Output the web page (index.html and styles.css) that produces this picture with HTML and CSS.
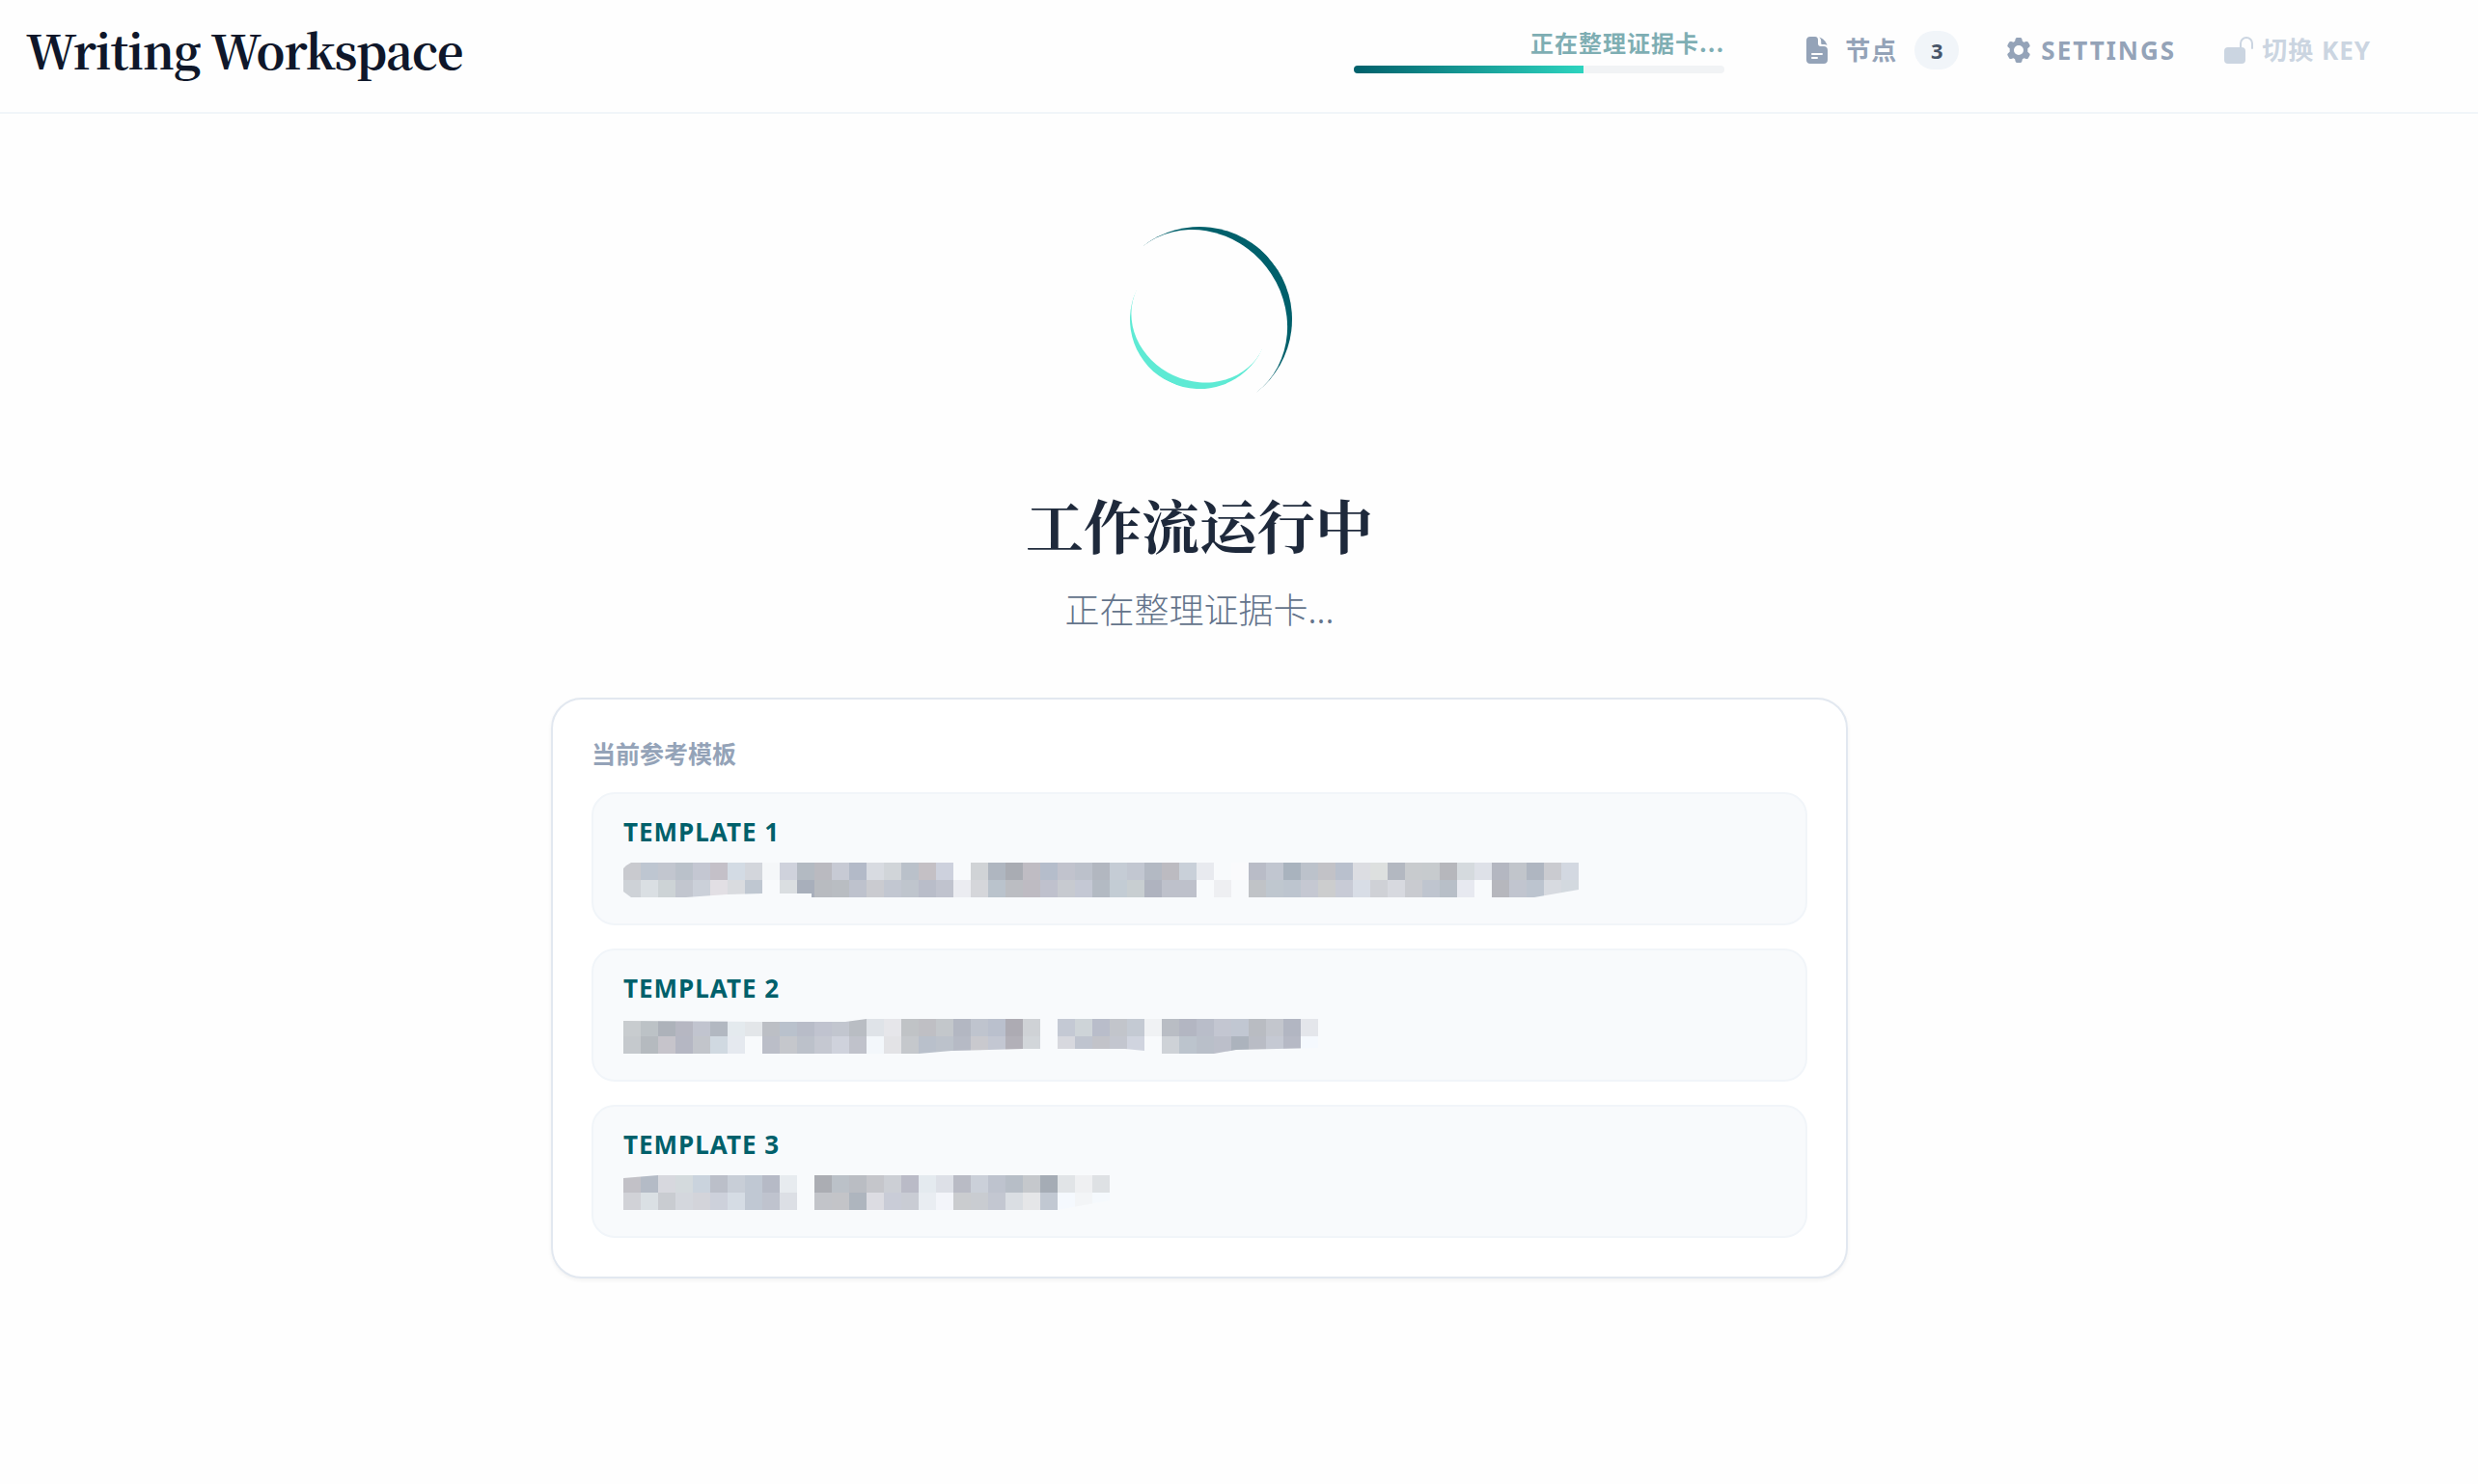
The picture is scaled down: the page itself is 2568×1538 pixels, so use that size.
FILE: index.html
```html
<!DOCTYPE html>
<html lang="zh-CN">
<head>
<meta charset="utf-8">
<meta name="viewport" content="width=device-width, initial-scale=1">
<title>Writing Workspace</title>
<link rel="stylesheet" href="styles.css">
</head>
<body>
<header class="topbar">
  <h1 class="brand">Writing Workspace</h1>
  <div class="status">
    <label class="status-label" for="run-progress">正在整理证据卡...</label>
    <progress class="status-bar" id="run-progress" value="62" max="100"></progress>
  </div>
  <nav class="actions">
    <button class="action action-cjk action-wide" type="button">
      <svg class="icon icon-doc" viewBox="0 0 22 28" aria-hidden="true">
        <path fill="currentColor" fill-rule="evenodd" d="M4 0h5c2 0 3 1.500 3 3.500V7c0 2 1 3 3 3h3c2.500 0 4 1.500 4 4v10c0 2.500-1.500 4-4 4H4c-2.500 0-4-1.500-4-4V4c0-2.500 1.500-4 4-4zM6 17a1 1 0 0 0 0 2h10a1 1 0 0 0 0-2zM6 21a1 1 0 0 0 0 2h5a1 1 0 0 0 0-2z"/>
        <path fill="currentColor" d="M13 .5c4 1 7.500 4.500 8.500 8.500-1-.6-2-.9-3-.9h-2c-.8 0-1.300-.5-1.300-1.300V4.500c0-1.500-.7-3-2.200-4z"/>
      </svg>
      <span>节点</span>
      <span class="badge">3</span>
    </button>
    <button class="action" type="button">
      <svg class="icon icon-gear" viewBox="0 0 26 26" aria-hidden="true">
        <path fill="currentColor" fill-rule="evenodd" d="M10.500 0h3c1 0 1.700.6 1.900 1.500l.5 2.300 1.600.9 2.200-.7c.9-.3 1.700 0 2.200.8l1.500 2.600c.5.900.3 1.700-.4 2.300L21.300 11.300v3.400l1.700 1.600c.7.600.9 1.400.4 2.300l-1.500 2.600c-.5.800-1.300 1.100-2.200.8l-2.200-.7-1.600.9-.5 2.300c-.2.900-.9 1.500-1.900 1.500h-3c-1 0-1.700-.6-1.900-1.500l-.5-2.300-1.600-.9-2.200.7c-.9.300-1.700 0-2.200-.8L.6 18.600c-.5-.9-.3-1.700.4-2.300l1.700-1.600v-3.400L1 9.700c-.7-.6-.9-1.400-.4-2.300l1.500-2.600c.5-.8 1.300-1.100 2.200-.8l2.200.7 1.600-.9.500-2.300C8.800.6 9.500 0 10.500 0zM12 8a5 5 0 1 0 0 10 5 5 0 0 0 0-10z"/>
      </svg>
      <span>SETTINGS</span>
    </button>
    <button class="action action-cjk action-muted" type="button">
      <svg class="icon icon-lock" viewBox="0 0 30 28" aria-hidden="true">
        <rect fill="currentColor" x="0" y="11" width="22" height="17" rx="4"/>
        <path fill="none" stroke="currentColor" stroke-width="2" stroke-linecap="round" d="M17 12V7a6 6 0 0 1 12 0v5"/>
      </svg>
      <span>切换 KEY</span>
    </button>
  </nav>
</header>

<main class="stage">
  <div class="spinner" aria-hidden="true">
    <div class="ring-inner"></div>
  </div>
  <h2 class="headline">工作流运行中</h2>
  <p class="substatus">正在整理证据卡...</p>

  <section class="panel">
    <h3 class="panel-title">当前参考模板</h3>
    <ul class="templates">
      <li class="template">
        <span class="template-name">TEMPLATE 1</span>
        <svg class="mosaic" data-mosaic="0" aria-hidden="true"></svg>
      </li>
      <li class="template">
        <span class="template-name">TEMPLATE 2</span>
        <svg class="mosaic" data-mosaic="1" aria-hidden="true"></svg>
      </li>
      <li class="template">
        <span class="template-name">TEMPLATE 3</span>
        <svg class="mosaic" data-mosaic="2" aria-hidden="true"></svg>
      </li>
    </ul>
  </section>
</main>
<script src="mosaic.js"></script>
</body>
</html>
```
FILE: styles.css
```css
:root {
  --ink: #0f172a;
  --heading: #1e293b;
  --muted: #94a3b8;
  --faint: #cbd5e1;
  --teal: #00606b;
  --mint: #5eead4;
  --line: #e2e8f0;
  --line-soft: #f1f5f9;
  --surface: #f8fafc;
}

* { box-sizing: border-box; }

body {
  margin: 0;
  background: #fefefe;
  color: var(--heading);
  font-family: "Noto Sans", "Noto Sans CJK SC", sans-serif;
  font-size: 26px;
  line-height: 32px;
}

h1, h2, h3, p, ul { margin: 0; padding: 0; }

.topbar {
  display: flex;
  align-items: center;
  height: 118px;
  padding: 0 111px 12px 27px;
  border-bottom: 2px solid var(--line-soft);
}

.brand {
  margin-right: auto;
  color: var(--ink);
  font-family: "Noto Serif CJK SC", "Source Serif 4", "Liberation Serif", serif;
  font-size: 48px;
  font-weight: 700;
  line-height: 64px;
  letter-spacing: -1px;
}

.status {
  display: flex;
  flex-direction: column;
  align-items: flex-end;
  gap: 8px;
  width: 384px;
  margin-right: 85px;
}

.status-label {
  color: var(--teal);
  font-family: "Noto Sans CJK SC", sans-serif;
  font-size: 24px;
  font-weight: 700;
  letter-spacing: 1px;
  opacity: 0.5;
}

.status-bar {
  appearance: none;
  display: block;
  width: 100%;
  height: 8px;
  border: 0;
  border-radius: 4px;
  overflow: hidden;
  background: #f1f3f5;
}

.status-bar::-webkit-progress-bar { background: #f1f3f5; }

.status-bar::-webkit-progress-value {
  background: linear-gradient(to right, var(--teal), #2dd4bf);
}

.actions {
  display: flex;
  align-items: center;
  gap: 50px;
}

.action {
  display: flex;
  align-items: center;
  gap: 9px;
  padding: 0;
  border: 0;
  background: none;
  color: var(--muted);
  font: inherit;
  font-weight: 700;
  letter-spacing: 2px;
}

.action-cjk { letter-spacing: 1px; }
.action-wide { gap: 18px; }
.action-muted { color: var(--faint); }

.icon { display: block; flex: none; }
.icon-doc { width: 22px; height: 28px; }
.icon-gear { width: 26px; height: 26px; }
.icon-lock { width: 30px; height: 28px; }

.badge {
  width: 46px;
  border-radius: 20px;
  background: var(--line-soft);
  color: #475569;
  font-size: 22px;
  line-height: 40px;
  letter-spacing: 0;
  text-align: center;
}

.stage {
  display: flex;
  flex-direction: column;
  align-items: center;
  padding: 117px 82px 116px 0;
}

.spinner {
  display: grid;
  place-items: center;
  width: 192px;
  height: 192px;
  border-top: 8px solid var(--teal);
  border-radius: 50%;
  transform: rotate(52deg);
}

.ring-inner {
  width: 144px;
  height: 144px;
  margin-top: -8px;
  border-bottom: 8px solid var(--mint);
  border-radius: 50%;
  transform: rotate(-27deg);
}

.headline {
  margin-top: 76px;
  font-family: "Noto Serif CJK SC", "Noto Sans CJK SC", serif;
  font-size: 60px;
  font-weight: 700;
  line-height: 80px;
}

.substatus {
  margin-top: 19px;
  color: #64748b;
  font-family: "Noto Sans CJK SC", sans-serif;
  font-size: 36px;
  font-weight: 300;
  line-height: 56px;
}

.panel {
  width: 1344px;
  max-width: 100%;
  margin-top: 65px;
  padding: 39px 40px 40px;
  border: 2px solid var(--line);
  border-radius: 32px;
  background: #fff;
  box-shadow: 0 2px 4px rgb(0 0 0 / 5%);
}

.panel-title {
  color: var(--muted);
  font-family: "Noto Sans CJK SC", sans-serif;
  font-size: 25px;
  line-height: 32px;
}

.templates {
  display: grid;
  gap: 24px;
  margin-top: 25px;
  list-style: none;
}

.template {
  padding: 23px 31px 24px;
  border: 2px solid var(--line-soft);
  border-radius: 24px;
  background: var(--surface);
}

.template-name {
  display: block;
  color: var(--teal);
  font-weight: 700;
  letter-spacing: 1px;
}

.mosaic {
  display: block;
  height: 36px;
  margin: 16px 0 3px;
}
```
FILE: mosaic.js
```js
// Redacted titles: two rows of 18px cells each; "-" leaves a cell empty.
const CELL = 18;
const MOSAICS = [
  {
    clip: "3,3 8,0 990,0 990,28 944,36 195,36 195,32 144,32 107,33 65,36 8,36 0,30 0,6",
    rows: [
      "c9cacf bec6d1 c2c6cf bac1ca c4c7d2 c4c0c8 d3dbe4 d3d6dc f5f7f9 cfd2dc b3bac2 babac0 c7cad4 b3bac8 d8dbe1 d1d5d9 bac1ca c4c0c5 cdd1dd - d0d3d6 afb6c0 a9acb3 bfbcc3 b5bdcb c1c3cd bcc1cb b2b7c0 c5ccd5 c2c7d1 b3b9c3 bcbbc1 c9d0d9 e8eaef - fafafc b9bcc7 c1c6d0 a9b3be bcc2cb c2c2c7 b9c0cd dcdde2 dde0df b3b8c1 c8cbce c7cbce b6b7bc d5dade dee1e8 b4b7c1 c1c5cb afb6c1 cacbd0 d3d8e1",
      "ced2d7 dadfe3 cdd3d6 c2c6cf cbd0d9 e2dfe4 d9dbdf bfc7d1 - dadee1 a8afbb b8bbc0 b9bdc2 bec2cd cacbd0 c2c7d1 bfc5cd b9bdc9 c0c3ce ebecf1 d5d6da bac3cc bbbdc2 bebbc2 bfc1cd c7cad0 c4c8d4 b3bac3 c3ccd4 c8ced1 afb3bf bec1cb bec1cb - eeeff2 - c0c3c7 bfc7cf bdc5cf c5c8d2 cccdce c8cbd6 d8dde6 cfd1d6 d7d9df c9cbd0 bfc5cf b8bfc8 e7e9f0 - b6b7bd c1c5cf bcc4cf d7dae0 d3d9df"
    ]
  },
  {
    clip: "0,2 144,3 230,3 252,0 720,0 720,30 635,32 612,36 556,36 540,33 520,31 414,31 340,33 306,36 0,36",
    rows: [
      "c8cccf bcc2c6 adb2ba b6b7c2 c1c4cf b2b8c1 e4eaee e3e6e9 bcbfc5 b9c1cc b8bcc8 c0c3cf c2c6cf b9bdc3 dfe3e8 e6e6ea c0c3c6 bfbfc4 c3c7cb b3b7c2 bfc4ce bac0cd adabb3 cfd2d6 - c4c9d4 ced4d8 b9bdca c2c5cb c4cad3 f0f2f4 b9bdc4 b3b6c2 b9bdc9 c3c6d1 c1c7d2 b9bcc2 c3c6cd b2b6c2 e4e6eb",
      "c5c9cd b5babf c6c4cb b5b7c3 c2c5cb d0d9e1 e5e9ef - bbbec8 c5c7cc bcc1ca c5c8d1 cfd2dc c0c2cb f3f7fb e3e3e6 c5c8cc b9c0cb bcc2cb b6bac5 c9c9ce c3c7d2 b2b0b8 d2d6da - d7d8de bfc4cf c2c3c9 c3c6cf d0d4df - ced2d7 bcc4cd b9bfc9 bcbfca acb3bd b9bcc5 c5c9d3 b6b9c5 f5f9fe"
    ]
  },
  {
    clip: "0,3 36,0 504,0 504,26 450,36 0,36",
    rows: [
      "c2c1c7 b4bbc6 d7d8de d4dadd cad3dd bbbfc9 c8ced7 c0c8d3 b6bac6 e7ebef - abadb3 bbc1c8 babdc3 c5c6cb cccfd5 babbc7 e4eaef dde0e7 b9bbc5 cbd0d9 bec3ce b7bec7 c5c8cc a5acb5 e1e4e7 eff0f2 dee1e4",
      "d1d2d7 dae0e4 c9ccd1 d4d7dd d3d4da cdd1db d5dce4 c0c8d3 bfc3ce dcdfe5 - c2c4c9 c3c4c8 aeb5be dcdce2 c9ccd7 c9ccd4 e9edf2 f3f5fa cacccf c9ccd1 c3c7d1 dadee3 e5e6e8 c1c8d2 f5f9fe f3f5f7 f5f9fd"
    ]
  }
];

document.querySelectorAll("[data-mosaic]").forEach((svg) => {
  const id = svg.dataset.mosaic;
  const { clip, rows } = MOSAICS[id];
  const columns = rows[0].split(" ").length;
  svg.setAttribute("width", columns * CELL);
  const cells = rows.map((row, y) =>
    row.split(" ").map((color, x) =>
      color === "-" ? "" :
        `<rect x="${x * CELL}" y="${y * CELL}" width="${CELL}" height="${CELL}" fill="#${color}"/>`
    ).join("")
  ).join("");
  svg.innerHTML =
    `<clipPath id="clip-${id}"><polygon points="${clip}"/></clipPath>` +
    `<g clip-path="url(#clip-${id})" shape-rendering="crispEdges">${cells}</g>`;
});
```
